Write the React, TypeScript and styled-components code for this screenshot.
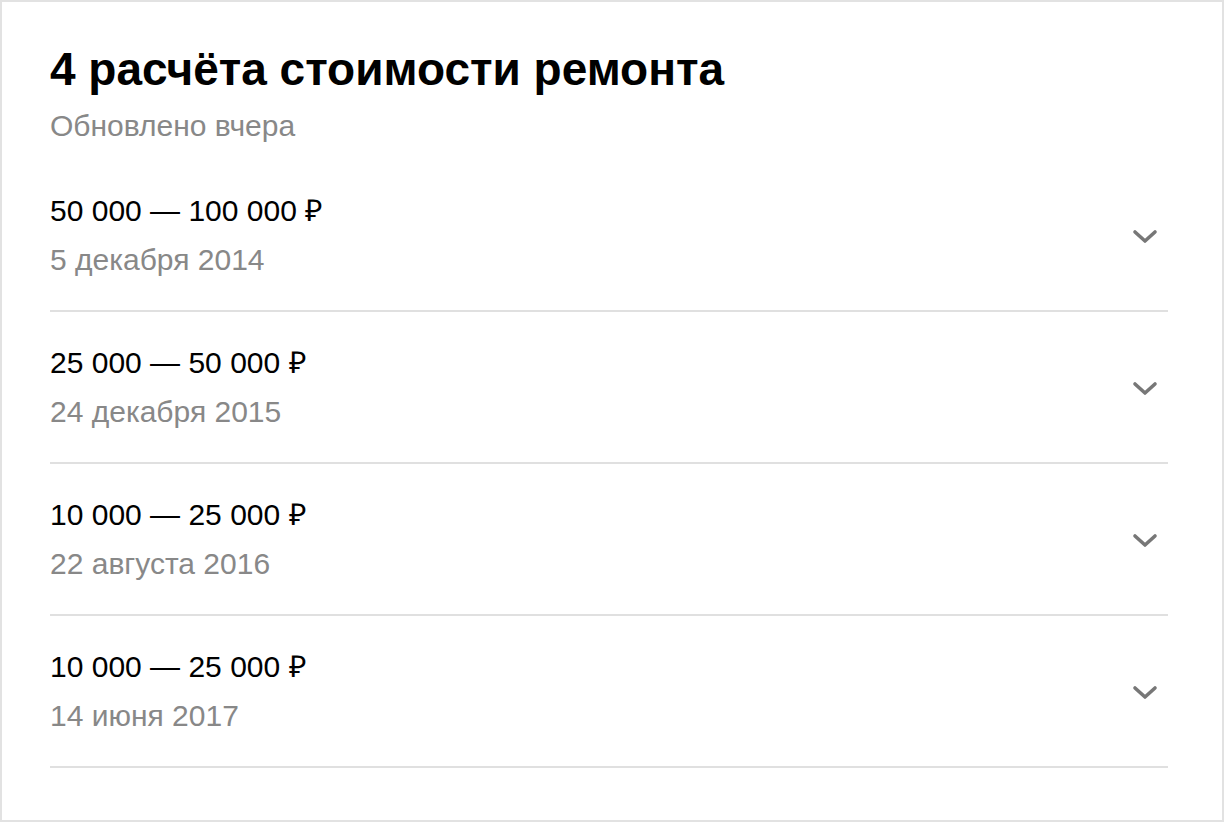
import React from 'react';
import styled, { createGlobalStyle } from 'styled-components';

interface Estimate {
  id: number;
  range: string;
  date: string;
}

const estimates: Estimate[] = [
  { id: 1, range: '50 000 — 100 000 ₽', date: '5 декабря 2014' },
  { id: 2, range: '25 000 — 50 000 ₽', date: '24 декабря 2015' },
  { id: 3, range: '10 000 — 25 000 ₽', date: '22 августа 2016' },
  { id: 4, range: '10 000 — 25 000 ₽', date: '14 июня 2017' },
];

const GlobalStyle = createGlobalStyle`
  html, body {
    margin: 0;
    padding: 0;
    background: #fff;
  }
  body {
    font-family: "Liberation Sans", Arial, sans-serif;
  }
`;

const Card = styled.section`
  box-sizing: border-box;
  width: 1224px;
  height: 822px;
  border: 2px solid #e2e2e2;
  background: #fff;
  padding: 40px 54px 0 48px;
  display: flex;
  flex-direction: column;
`;

const Header = styled.header`
  display: flex;
  flex-direction: column;
  margin-bottom: 14px;
`;

const Title = styled.h1`
  margin: 0;
  font-size: 46px;
  line-height: 54px;
  font-weight: 700;
  color: #000;
`;

const Subtitle = styled.p`
  margin: 10px 0 0;
  font-size: 30px;
  line-height: 40px;
  color: #888;
`;

const List = styled.ul`
  list-style: none;
  margin: 0;
  padding: 0;
`;

const Row = styled.li`
  display: flex;
  align-items: center;
  justify-content: space-between;
  padding: 26px 10px 26px 0;
  border-bottom: 2px solid #e0e0e0;
  cursor: pointer;
`;

const Info = styled.div`
  display: flex;
  flex-direction: column;
`;

const Range = styled.span`
  font-size: 30px;
  line-height: 49px;
  color: #000;
`;

const DateText = styled.span`
  font-size: 30px;
  line-height: 49px;
  color: #888;
`;

const ChevronIcon = styled.svg`
  display: block;
  width: 26px;
  height: 16px;
  margin-top: 4px;
  color: #777;
`;

const Chevron = () => (
  <ChevronIcon viewBox="0 0 26 16" fill="none">
    <polyline
      points="3,3 13,12 23,3"
      stroke="currentColor"
      strokeWidth="3.6"
      strokeLinecap="round"
      strokeLinejoin="round"
    />
  </ChevronIcon>
);

export default function App() {
  return (
    <>
      <GlobalStyle />
      <Card>
        <Header>
          <Title>4 расчёта стоимости ремонта</Title>
          <Subtitle>Обновлено вчера</Subtitle>
        </Header>
        <List>
          {estimates.map((item) => (
            <Row key={item.id}>
              <Info>
                <Range>{item.range}</Range>
                <DateText>{item.date}</DateText>
              </Info>
              <Chevron />
            </Row>
          ))}
        </List>
      </Card>
    </>
  );
}
